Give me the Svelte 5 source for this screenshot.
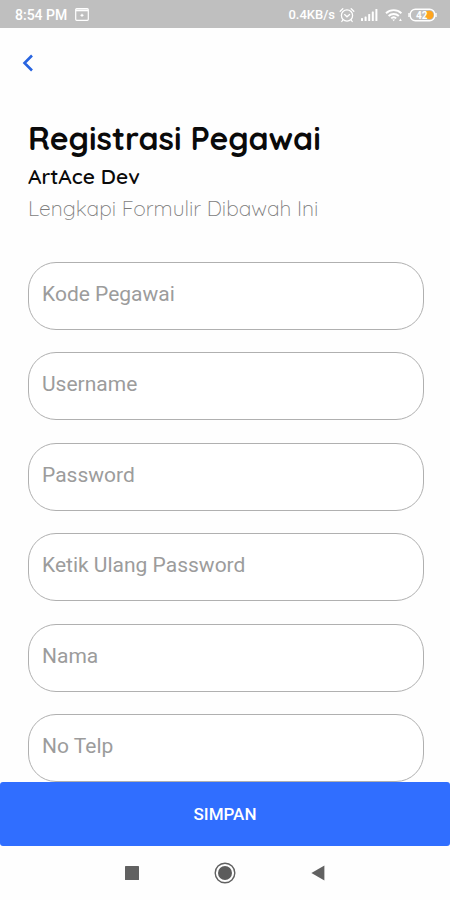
<script lang="ts">
  type Field = { name: string; label: string; type: string };

  const fields: Field[] = [
    { name: "kode", label: "Kode Pegawai", type: "text" },
    { name: "username", label: "Username", type: "text" },
    { name: "password", label: "Password", type: "password" },
    { name: "ulang", label: "Ketik Ulang Password", type: "password" },
    { name: "nama", label: "Nama", type: "text" },
    { name: "telp", label: "No Telp", type: "tel" },
  ];

  let values: Record<string, string> = $state({
    kode: "",
    username: "",
    password: "",
    ulang: "",
    nama: "",
    telp: "",
  });

  function handleSubmit(e: SubmitEvent) {
    e.preventDefault();
  }
</script>

<div class="screen">
  <div class="status-bar">
    <span>8:54 PM</span>
    <svg class="calendar" width="14" height="13" viewBox="0 0 14 13" aria-hidden="true">
      <rect x="0.7" y="0.7" width="12.6" height="11.6" rx="1" fill="none" stroke="#fff" stroke-width="1.2" />
      <path d="M1 2.4h12" stroke="#fff" stroke-width="1.8" />
      <path d="M7 5.8v3M5.5 7.3h3" stroke="#fff" stroke-width="1.2" />
    </svg>
    <span class="speed">0.4KB/s</span>
    <svg width="16" height="16" viewBox="0 0 16 16" fill="none" stroke="#fff" stroke-width="1.3" stroke-linecap="round" aria-hidden="true">
      <circle cx="8" cy="8.5" r="5.6" />
      <path d="M1.2 4.2l2.6-2.4M14.8 4.2l-2.6-2.4M5.6 7.6L8 9.8l2.6-2.4M3.8 13l-1 1.5M12.2 13l1 1.5" />
    </svg>
    <svg class="signal" width="17" height="12" viewBox="0 0 17 12" fill="#fff" aria-hidden="true">
      <rect x="0" y="9" width="2" height="3" rx="0.6" />
      <rect x="3.6" y="7.5" width="2" height="4.5" rx="0.6" />
      <rect x="7.2" y="5" width="2" height="7" rx="0.6" />
      <rect x="10.8" y="2.5" width="2" height="9.5" rx="0.6" />
      <rect x="14.4" y="0" width="2" height="12" rx="0.6" />
    </svg>
    <svg class="wifi" width="18" height="14" viewBox="0 0 18 14" fill="none" stroke="#fff" stroke-width="1.9" aria-hidden="true">
      <path d="M1 5.2a11.2 11.2 0 0 1 15.4 0M3.6 8a7.4 7.4 0 0 1 10.2 0M6.2 10.4a3.6 3.6 0 0 1 5 0" />
      <path d="M7.4 11.6h2.6l-1.3 1.6z" fill="#fff" stroke="none" />
      <path d="M14 13l1.4-2.4L16.8 13z" fill="#fff" stroke="none" />
    </svg>
    <svg width="29" height="14" viewBox="0 0 29 14" aria-hidden="true">
      <rect x="2.2" y="1.2" width="24.6" height="11.6" rx="5.2" fill="none" stroke="#fff" stroke-width="1.4" />
      <path d="M1 5v4M28 5v4" stroke="#fff" stroke-width="1.4" />
      <path d="M18 3h3a4 4 0 0 1 0 8h-3z" fill="#ffa51f" />
      <circle cx="21.3" cy="7" r="4.2" fill="#ffa51f" />
      <text class="charge" x="8" y="11" fill="#fff">42</text>
    </svg>
  </div>

  <header>
    <button class="back" type="button" aria-label="Kembali">
      <svg width="12" height="18" viewBox="0 0 12 18" fill="none" stroke="#2864e0" stroke-width="2.6" aria-hidden="true">
        <path d="M10 1.5L2.5 9l7.5 7.5" />
      </svg>
    </button>
    <h1>Registrasi Pegawai</h1>
    <h2>ArtAce Dev</h2>
    <p>Lengkapi Formulir Dibawah Ini</p>
  </header>

  <form id="registrasi" onsubmit={handleSubmit}>
    {#each fields as field (field.name)}
      <input
        name={field.name}
        type={field.type}
        placeholder={field.label}
        aria-label={field.label}
        bind:value={values[field.name]}
      />
    {/each}
  </form>

  <button class="save" type="submit" form="registrasi">SIMPAN</button>

  <nav>
    <button type="button" aria-label="Aplikasi terbaru">
      <svg width="14" height="14" viewBox="0 0 14 14" aria-hidden="true">
        <rect width="14" height="14" rx="0.6" fill="#616161" />
      </svg>
    </button>
    <button type="button" aria-label="Beranda">
      <svg width="22" height="22" viewBox="0 0 22 22" aria-hidden="true">
        <circle cx="11" cy="11" r="9.8" fill="none" stroke="#616161" stroke-width="1.4" />
        <circle cx="11" cy="11" r="7" fill="#5c5c5c" />
      </svg>
    </button>
    <button type="button" aria-label="Kembali ke layar sebelumnya">
      <svg width="14" height="16" viewBox="0 0 14 16" aria-hidden="true">
        <path d="M0.4 8L13.4 0.6v14.8z" fill="#616161" />
      </svg>
    </button>
  </nav>
</div>

<style>
  :global(body) {
    margin: 0;
    background: #fefefe;
  }

  .screen {
    display: flex;
    flex-direction: column;
    min-height: 100vh;
    font-family: Roboto, sans-serif;
  }

  button {
    border: 0;
    padding: 0;
    background: none;
    font-family: inherit;
    cursor: pointer;
  }

  svg {
    display: block;
    flex: none;
  }

  .status-bar {
    display: flex;
    align-items: center;
    gap: 4px;
    height: 28px;
    box-sizing: border-box;
    padding: 1px 13px 0 15px;
    background: #bfbfbf;
    color: #fff;
    font-size: 14px;
    font-weight: 500;
  }

  .calendar {
    margin-left: 4px;
  }

  .speed {
    margin-left: auto;
    font-size: 13px;
  }

  .signal,
  .wifi {
    margin: 0 1px 0 2px;
  }

  .charge {
    font-size: 10px;
    font-weight: 700;
  }

  header {
    padding: 24px 28px 0;
    font-family: Quicksand, Inter, sans-serif;
    color: #0a0a0a;
  }

  .back {
    display: flex;
    align-items: center;
    width: 24px;
    height: 22px;
    margin-left: -6px;
  }

  h1 {
    margin: 44px 0 0;
    font-size: 32px;
    font-weight: 700;
    line-height: 40px;
  }

  h2 {
    margin: 6px 0 0;
    font-size: 21px;
    font-weight: 600;
    line-height: 24px;
  }

  p {
    margin: 6px 0 0;
    font-size: 21px;
    font-weight: 300;
    line-height: 28px;
    color: #7c7c7c;
  }

  form {
    display: flex;
    flex: 1;
    flex-direction: column;
    justify-content: space-between;
    gap: 22px;
    padding: 40px 26px 0 28px;
  }

  input {
    height: 68px;
    box-sizing: border-box;
    padding: 0 13px 4px;
    border: 1px solid #b0b0b0;
    border-radius: 28px;
    background: #fff;
    color: #222;
    font-family: inherit;
    font-size: 21px;
  }

  input::placeholder {
    color: #9c9c9c;
    opacity: 1;
  }

  .save {
    height: 64px;
    border-radius: 3px;
    background: #306eff;
    color: #fff;
    font-size: 17px;
    font-weight: 500;
  }

  nav {
    display: flex;
    justify-content: center;
    gap: 54px;
    height: 54px;
  }

  nav button {
    display: grid;
    place-items: center;
    width: 39px;
  }
</style>
